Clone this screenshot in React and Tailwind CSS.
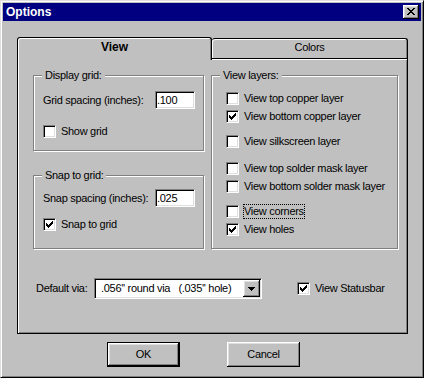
const FONT = "font-['Liberation_Sans',Arial,sans-serif]";

const RAISED =
  'bg-[#c0c0c0] shadow-[inset_-1px_-1px_0_#000,inset_1px_1px_0_#fff,inset_-2px_-2px_0_#808080,inset_2px_2px_0_#dfdfdf]';
const SUNKEN =
  'border border-t-[#808080] border-l-[#808080] border-b-white border-r-white bg-white shadow-[inset_1px_1px_0_#000,inset_-1px_-1px_0_#dfdfdf]';

function CheckMark() {
  return (
    <svg width="7" height="7" viewBox="0 0 7 7" shapeRendering="crispEdges" className="block">
      <path
        d="M6 0h1v1H6zM5 1h2v1H5zM0 2h1v1H0zM4 2h3v1H4zM0 3h2v1H0zM3 3h3v1H3zM0 4h5v1H0zM1 5h3v1H1zM2 6h1v1H2z"
        fill="#000"
      />
    </svg>
  );
}

function Checkbox({ checked, label, focus, className = '' }) {
  return (
    <div className={`flex items-center ${className}`}>
      <span className={`flex h-[13px] w-[13px] shrink-0 items-center justify-center ${SUNKEN}`}>
        {checked && <CheckMark />}
      </span>
      <span className={`ml-[5px] ${focus ? 'outline outline-1 outline-dotted outline-black' : ''}`}>{label}</span>
    </div>
  );
}

function Group({ label, className = '', children }) {
  return (
    <div className={`relative border border-[#808080] shadow-[inset_1px_1px_0_#fff,1px_1px_0_#fff] ${className}`}>
      <span className="absolute -top-[7px] left-[8px] bg-[#c0c0c0] px-[3px]">{label}</span>
      {children}
    </div>
  );
}

function Field({ value }) {
  return <div className={`h-[18px] w-[40px] pl-[1px] leading-[16px] ${SUNKEN}`}>{value}</div>;
}

const LAYERS = [
  { label: 'View top copper layer', mt: '' },
  { label: 'View bottom copper layer', checked: true, mt: 'mt-[5px]' },
  { label: 'View silkscreen layer', mt: 'mt-[12px]' },
  { label: 'View top solder mask layer', mt: 'mt-[14px]' },
  { label: 'View bottom solder mask layer', mt: 'mt-[5px]' },
  { label: 'View corners', focus: true, mt: 'mt-[12px]' },
  { label: 'View holes', checked: true, mt: 'mt-[5px]' },
];

export default function App() {
  return (
    <div className={`${FONT} h-[378px] w-[424px] text-[11px] leading-[13px] tracking-[-0.3px] text-black`}>
      <div className="h-full w-full border border-t-[#dfdfdf] border-l-[#dfdfdf] border-b-black border-r-black bg-[#c0c0c0] p-[2px] shadow-[inset_1px_1px_0_#fff,inset_-1px_-1px_0_#808080]">
        {/* title bar */}
        <div className="flex h-[18px] items-center justify-between bg-[#000080] pl-[3px] pr-[2px]">
          <span className="text-[12px] font-bold tracking-normal text-white">Options</span>
          <div className={`h-[14px] w-[16px] pl-[4px] pt-[3px] ${RAISED}`}>
            <svg width="8" height="7" viewBox="0 0 8 7" shapeRendering="crispEdges" className="block">
              <path
                d="M0 0h2v1H0zM6 0h2v1H6zM1 1h2v1H1zM5 1h2v1H5zM2 2h4v1H2zM3 3h2v1H3zM2 4h4v1H2zM1 5h2v1H1zM5 5h2v1H5zM0 6h2v1H0zM6 6h2v1H6z"
                fill="#000"
              />
            </svg>
          </div>
        </div>

        <div className="pl-[14px] pt-[16px]">
          {/* tabs */}
          <div className="flex h-[21px] items-start">
            <div className="relative z-10 flex h-[23px] w-[195px] justify-center rounded-t-[3px] border border-b-0 border-black bg-[#c0c0c0] pt-[3px] text-[12px] font-bold tracking-normal shadow-[inset_1px_1px_0_#fff,inset_-1px_0_0_#808080]">
              View
            </div>
            <div className="mt-[1px] flex h-[20px] w-[196px] justify-center rounded-t-[3px] border border-b-0 border-l-0 border-black pt-[2px] shadow-[inset_1px_1px_0_#fff,inset_-1px_0_0_#808080]">
              Colors
            </div>
          </div>

          {/* panel */}
          <div className="h-[276px] w-[391px] border border-black pl-[15px] pt-[16px] shadow-[inset_1px_1px_0_#fff,inset_-1px_-1px_0_#808080]">
            <div className="flex gap-[7px]">
              <div className="flex w-[171px] flex-col gap-[24px]">
                <Group label="Display grid:" className="h-[76px] pl-[9px] pr-[8px] pt-[15px]">
                  <div className="flex items-center justify-between">
                    <span>Grid spacing (inches):</span>
                    <Field value=".100" />
                  </div>
                  <Checkbox label="Show grid" className="mt-[16px]" />
                </Group>
                <Group label="Snap to grid:" className="h-[74px] pl-[9px] pr-[8px] pt-[13px]">
                  <div className="flex items-center justify-between">
                    <span>Snap spacing (inches):</span>
                    <Field value=".025" />
                  </div>
                  <Checkbox label="Snap to grid" checked className="mt-[11px]" />
                </Group>
              </div>
              <Group label="View layers:" className="h-[174px] w-[187px] pl-[14px] pt-[16px]">
                {LAYERS.map(l => (
                  <Checkbox key={l.label} label={l.label} checked={l.checked} focus={l.focus} className={l.mt} />
                ))}
              </Group>
            </div>

            {/* default via */}
            <div className="mt-[29px] flex items-center pl-[3px]">
              <span className="w-[58px]">Default via:</span>
              <div className={`flex h-[21px] w-[168px] items-center p-[1px] ${SUNKEN}`}>
                <span className="flex-1 whitespace-pre pl-[5px]">{".056'' round via   (.035'' hole)"}</span>
                <div className={`flex h-[17px] w-[17px] items-center justify-center ${RAISED}`}>
                  <svg width="7" height="4" viewBox="0 0 7 4" shapeRendering="crispEdges" className="block">
                    <path d="M0 0h7v1H0zM1 1h5v1H1zM2 2h3v1H2zM3 3h1v1H3z" fill="#000" />
                  </svg>
                </div>
              </div>
              <Checkbox label="View Statusbar" checked className="ml-[35px]" />
            </div>
          </div>

          {/* buttons */}
          <div className="ml-[90px] mt-[8px] flex gap-[47px]">
            <div className="h-[25px] w-[73px] border border-black">
              <div className={`flex h-full w-full items-center justify-center ${RAISED}`}>OK</div>
            </div>
            <div className={`flex h-[25px] w-[73px] items-center justify-center ${RAISED}`}>Cancel</div>
          </div>
        </div>
      </div>
    </div>
  );
}
